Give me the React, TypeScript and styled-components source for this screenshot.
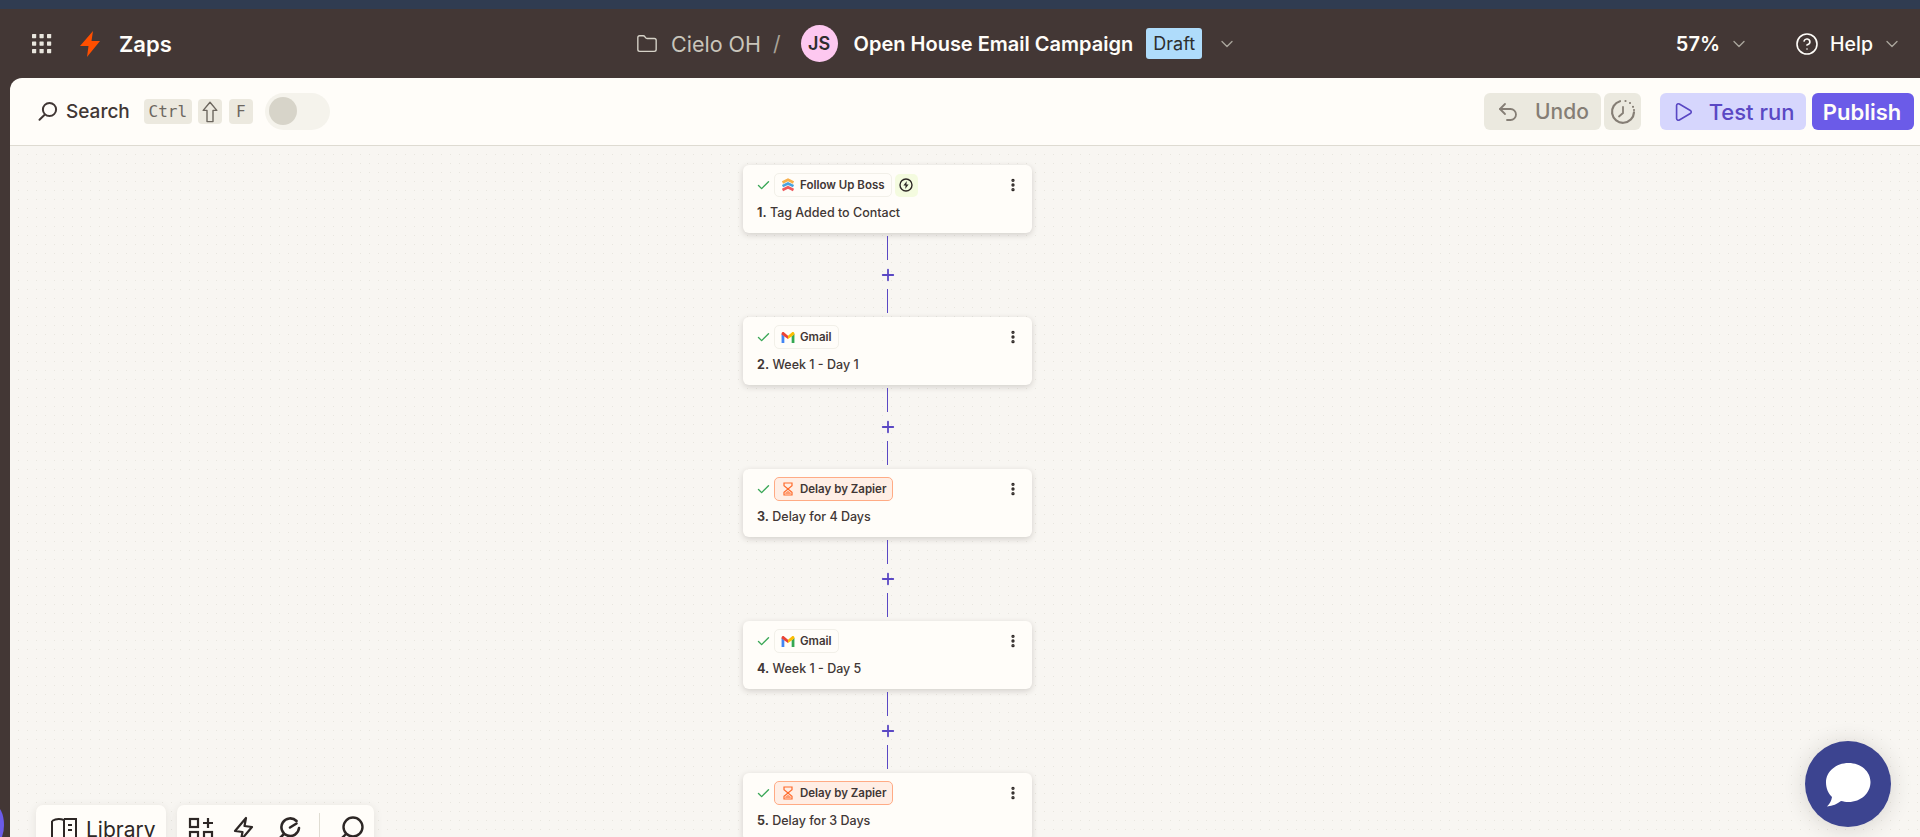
import React from "react";
import styled, { createGlobalStyle } from "styled-components";
import { Check, ChevronDown, CircleHelp, EllipsisVertical, Folder, Play, Plus, Undo2 } from "lucide-react";

const Global = createGlobalStyle`
  html, body { margin: 0; padding: 0; height: 837px; overflow: hidden; background: #433735; }
  * { box-sizing: border-box; }
  body { font-family: Inter, "Noto Sans", sans-serif; }
`;

const Page = styled.div`
  position: relative;
  height: 837px;
  display: flex;
  flex-direction: column;
  overflow: hidden;
`;
const TopStrip = styled.div`
  height: 9px;
  flex: none;
  background: #303c51;
`;
const Header = styled.header`
  height: 69px;
  flex: none;
  display: grid;
  grid-template-columns: 636px 1fr auto;
  align-items: center;
  background: #433735;
  color: #fffdf9;
`;
const HeaderLeft = styled.div`
  display: flex;
  align-items: center;
  padding-left: 32px;
`;
const BoltSlot = styled.span`
  display: flex;
  margin-left: 28px;
`;
const Zaps = styled.span`
  margin-left: 19px;
  font-size: 22px;
  font-weight: 600;
`;
const Crumbs = styled.div`
  display: flex;
  align-items: center;
`;
const FolderName = styled.span`
  margin-left: 13px;
  font-size: 21.5px;
  color: #c9c5bb;
`;
const Slash = styled.span`
  margin: 0 20px 0 12px;
  font-size: 21px;
  color: #a8a297;
`;
const Avatar = styled.div`
  width: 37px;
  height: 37px;
  border-radius: 50%;
  background: #fdc8f0;
  color: #2d2e2e;
  font-size: 18px;
  font-weight: 600;
  display: flex;
  align-items: center;
  justify-content: center;
`;
const ZapTitle = styled.span`
  margin-left: 16px;
  font-size: 20px;
  font-weight: 600;
  white-space: nowrap;
`;
const Draft = styled.span`
  margin-left: 13px;
  width: 56px;
  height: 31px;
  border-radius: 3px;
  background: #afdcfb;
  color: #2d2e2e;
  font-size: 18px;
  display: flex;
  align-items: center;
  justify-content: center;
`;
const HeaderChevron = styled.span<{ $gap: number }>`
  display: flex;
  margin-left: ${(p) => p.$gap}px;
  color: #aaa59c;
`;
const HeaderRight = styled.div`
  display: flex;
  align-items: center;
  padding-right: 18px;
`;
const Zoom = styled.span`
  font-size: 20px;
  font-weight: 600;
`;
const HelpLabel = styled.span`
  margin-left: 11px;
  font-size: 19.5px;
  font-weight: 500;
`;
const HelpIcon = styled.span`
  display: flex;
  margin-left: 46px;
`;
const Panel = styled.main`
  flex: 1;
  min-height: 0;
  margin-left: 10px;
  border-top-left-radius: 12px;
  overflow: hidden;
  display: flex;
  flex-direction: column;
  background: #fffdf9;
`;
const Toolbar = styled.div`
  height: 68px;
  flex: none;
  display: flex;
  align-items: center;
  padding: 0 6px 0 27px;
  border-bottom: 1px solid #dedbd2;
`;
const SearchLabel = styled.span`
  margin-left: 8px;
  font-size: 19px;
  font-weight: 500;
  color: #413735;
`;
const Kbd = styled.span<{ $w: number; $gap: number }>`
  width: ${(p) => p.$w}px;
  height: 25px;
  margin-left: ${(p) => p.$gap}px;
  border-radius: 4px;
  background: #ece9df;
  color: #6d675f;
  font-family: "DejaVu Sans Mono", "Liberation Mono", monospace;
  font-size: 16px;
  display: flex;
  align-items: center;
  justify-content: center;
`;
const Toggle = styled.span`
  width: 65px;
  height: 37px;
  margin-left: 12px;
  padding: 4px;
  border-radius: 19px;
  background: #f5f3ec;
  display: flex;
`;
const Knob = styled.span`
  width: 28px;
  height: 28px;
  border-radius: 50%;
  background: #d7d4c9;
`;
const Spacer = styled.div`
  flex: 1;
`;
const ToolButton = styled.button<{ $variant: "muted" | "soft" | "solid"; $w: number; $gap: number; $size: number }>`
  width: ${(p) => p.$w}px;
  height: 37px;
  margin-left: ${(p) => p.$gap}px;
  padding: 0 ${(p) => (p.$variant === "solid" ? 2 : 0)}px 0 0;
  border: 0;
  border-radius: 6px;
  display: flex;
  align-items: center;
  justify-content: center;
  font-family: inherit;
  font-size: ${(p) => p.$size}px;
  font-weight: ${(p) => (p.$variant === "solid" ? 600 : 500)};
  background: ${(p) => (p.$variant === "muted" ? "#ebe9df" : p.$variant === "soft" ? "#d6d6fd" : "#6b5be8")};
  color: ${(p) => (p.$variant === "muted" ? "#857e75" : p.$variant === "soft" ? "#5a48c4" : "#fffdf9")};
  gap: ${(p) => (p.$variant === "solid" ? 0 : 15)}px;
`;
const Canvas = styled.div`
  position: relative;
  flex: 1;
  min-height: 0;
  overflow: hidden;
  padding: 19px 0 0 733px;
  background-color: #f8f6f2;
  background-image: radial-gradient(circle, #e8e6df 0.8px, transparent 1px);
  background-size: 9px 9px;
  background-position: 4px 4px;
`;
const Flow = styled.div`
  width: 289px;
  display: flex;
  flex-direction: column;
`;
const Card = styled.div`
  height: 68px;
  flex: none;
  padding: 8px 11px 0 14px;
  border-radius: 6px;
  background: #fffdf9;
  box-shadow: 0 2px 6px rgba(45, 35, 30, 0.18);
`;
const CardTop = styled.div`
  display: flex;
  align-items: center;
  height: 24px;
`;
const CheckMark = styled.span`
  display: flex;
  width: 18px;
  margin-left: -1px;
  color: #3aa757;
`;
const AppBadge = styled.span<{ $delay?: boolean }>`
  height: 24px;
  display: flex;
  align-items: center;
  gap: 5px;
  padding: 0 6px;
  border-radius: 5px;
  font-size: 11.5px;
  font-weight: 600;
  color: #413735;
  background: ${(p) => (p.$delay ? "#ffeee5" : "#fffdf9")};
  border: 1px solid ${(p) => (p.$delay ? "#ffab85" : "#f2f0e9")};
`;
const TriggerBadge = styled.span`
  width: 23px;
  height: 23px;
  margin-left: 3px;
  border-radius: 5px;
  background: #f4fbdf;
  display: flex;
  align-items: center;
  justify-content: center;
`;
const Kebab = styled.span`
  display: flex;
  margin-left: auto;
  color: #2d2725;
`;
const StepTitle = styled.div`
  margin-top: 8px;
  font-size: 12.5px;
  font-weight: 500;
  color: #413735;
  b {
    font-weight: 700;
  }
`;
const Connector = styled.div`
  height: 84px;
  flex: none;
  padding: 3px 0 4px;
  display: flex;
  flex-direction: column;
  align-items: center;
  justify-content: space-between;
  color: #5a48c4;
`;
const Line = styled.span`
  width: 1px;
  height: 24px;
  background: #5a48c4;
`;
const Dock = styled.div`
  position: absolute;
  left: 26px;
  top: 659px;
  display: flex;
  gap: 11px;
`;
const DockCard = styled.div<{ $w: number }>`
  width: ${(p) => p.$w}px;
  height: 48px;
  padding: 0 0 0 11px;
  border-radius: 7px;
  background: #fffdf9;
  box-shadow: 0 2px 10px rgba(45, 35, 30, 0.1);
  display: flex;
  align-items: center;
  color: #2d2725;
  font-size: 21px;
`;
const DockLabel = styled.span`
  margin-left: 9px;
`;
const DockItem = styled.span<{ $gap: number }>`
  display: flex;
  flex: none;
  margin-left: ${(p) => p.$gap}px;
`;
const DockDivider = styled.span`
  flex: none;
  width: 1px;
  height: 32px;
  margin-left: 18px;
  background: #e0ddd3;
`;
const ChatButton = styled.div`
  position: absolute;
  right: 29px;
  bottom: 10px;
  width: 86px;
  height: 86px;
  border-radius: 50%;
  background: #3c4490;
  box-shadow: 0 2px 22px rgba(45, 35, 30, 0.16);
  display: flex;
  align-items: center;
  justify-content: center;
`;
const EdgeBlob = styled.div`
  position: absolute;
  left: -16px;
  top: 805px;
  width: 20px;
  height: 40px;
  border-radius: 50%;
  background: #6b5be8;
`;

const GridIcon = () => (
  <svg width="20" height="20" viewBox="0 0 20 20" fill="#e9e6de">
    {[0, 7.5, 15].flatMap((y) =>
      [0, 7.5, 15].map((x) => <rect key={`${x}-${y}`} x={x} y={y} width="4.2" height="4.2" rx="0.6" />)
    )}
  </svg>
);
const Bolt = () => (
  <svg width="20" height="26" viewBox="0 0 20 26" fill="#ff4f00">
    <path d="M13 0 L11.500 10 H20 L7 26 L8.500 15 H0 Z" />
  </svg>
);
const SearchIcon = () => (
  <svg width="21" height="21" viewBox="0 0 21 21" fill="none" stroke="#413735" strokeWidth="2">
    <circle cx="12.500" cy="8.500" r="6.600" />
    <path d="M7.400 14 L2.500 18.800" strokeLinecap="round" />
  </svg>
);
const ShiftIcon = () => (
  <svg width="16" height="22" viewBox="0 0 16 22" fill="none" stroke="#6d675f" strokeWidth="1.400">
    <path d="M8 1.200 L14.800 9.400 H11 V20.600 H5 V9.400 H1.200 Z" strokeLinejoin="round" />
  </svg>
);
const HistoryIcon = () => (
  <svg width="26" height="26" viewBox="0 0 26 26" fill="none" stroke="#857e75" strokeWidth="2.200" strokeLinecap="round">
    <path d="M10 2.200 A11 11 0 1 0 24 13.400" />
    <path d="M13 8 V14 L9 17.500" strokeWidth="1.800" />
    <path d="M15.500 2 h.01 M20 4 h.01 M23 7.800 h.01 M24 11 h.01" />
  </svg>
);
const FubIcon = () => (
  <svg width="14" height="14" viewBox="0 0 14 14" fill="none" strokeWidth="2.600">
    <path d="M1.500 4.500 L7 1.800 L12.500 4.500" stroke="#f7b04c" />
    <path d="M1.500 8.200 L7 5.500 L12.500 8.200" stroke="#4aa3df" />
    <path d="M1.500 12 L7 9.300 L12.500 12" stroke="#ef5a5f" />
  </svg>
);
const GmailIcon = () => (
  <svg width="14" height="11" viewBox="0 0 14 12" fill="none">
    <path d="M0 2 V12 H3 V5 Z" fill="#4285f4" />
    <path d="M11 5 V12 H14 V2 Z" fill="#34a853" />
    <path d="M0 2 C0 .4 1.600 -.4 2.800 .5 L7 4 L7 7.600 L0 2.600 Z" fill="#ea4335" />
    <path d="M14 2 C14 .4 12.400 -.4 11.200 .5 L7 4 L7 7.600 L14 2.600 Z" fill="#fbbc04" />
  </svg>
);
const HourglassIcon = () => (
  <svg width="14" height="14" viewBox="0 0 14 14" fill="none" stroke="#ff6a2b" strokeWidth="1.200">
    <path d="M3 1 H11 V3.800 L7 7 L3 3.800 Z" />
    <path d="M3 13 H11 V10.200 L7 7 L3 10.200 Z" />
    <path d="M4.200 12 H9.800 V10.800 L7 8.800 L4.200 10.800 Z" fill="#ff9b70" stroke="none" />
  </svg>
);
const TriggerIcon = () => (
  <svg width="14" height="14" viewBox="0 0 14 14" fill="none">
    <circle cx="7" cy="7" r="6" stroke="#2d2725" strokeWidth="1.400" />
    <path d="M7.800 3 L4.400 7.600 H6.600 L6.200 11 L9.600 6.400 H7.400 Z" fill="#2d2725" />
  </svg>
);
const LibraryIcon = () => (
  <svg width="26" height="26" viewBox="0 0 26 26" fill="none" stroke="#2d2725" strokeWidth="2">
    <path d="M1 5 C5 2.500 9 2.500 13 4 V26 M1 5 V26" />
    <path d="M13 3 H25 V26" />
    <path d="M17 9 H21 M17 14 H21" />
  </svg>
);
const AppsIcon = () => (
  <svg width="26" height="26" viewBox="0 0 26 26" fill="none" stroke="#2d2725" strokeWidth="2.200">
    <rect x="2" y="3" width="8" height="8" />
    <rect x="2" y="16" width="8" height="8" />
    <rect x="16" y="16" width="8" height="8" />
    <path d="M20 2 V12 M15 7 H25" />
  </svg>
);
const DockBolt = () => (
  <svg width="22" height="26" viewBox="0 0 22 26" fill="none" stroke="#2d2725" strokeWidth="2.200" strokeLinejoin="round">
    <path d="M13 2 L11.500 10 L19 11 L8 24 L9.500 16 L2 15 Z" />
  </svg>
);
const WandIcon = () => (
  <svg width="26" height="26" viewBox="0 0 26 26" fill="none" stroke="#2d2725" strokeWidth="2.600" strokeLinecap="round">
    <path d="M21.500 5 A8.800 8.800 0 1 0 24 12" />
    <path d="M15 11.500 L21.500 7.500" />
    <path d="M9 18 L3 24" />
  </svg>
);
const DockSearch = () => (
  <svg width="26" height="26" viewBox="0 0 26 26" fill="none" stroke="#2d2725" strokeWidth="2.400">
    <circle cx="15" cy="11" r="9.500" />
    <path d="M8 18 L3.500 22.500" />
  </svg>
);
const ChatIcon = () => (
  <svg width="46" height="46" viewBox="0 0 46 46" fill="#ffffff">
    <path d="M23.500 2 C36 2 45.500 10.500 45.500 21 C45.500 32 36 41 23.500 41 C20.500 41 18.500 40.500 16 40 C12 43 8 45 2 45.500 C5 42.500 6.500 39.500 7 36 C3 32.500 1 27 1 21.500 C1 10.500 11 2 23.500 2 Z" />
  </svg>
);

const steps = [
  { n: 1, app: "Follow Up Boss", icon: <FubIcon />, title: "Tag Added to Contact", trigger: true },
  { n: 2, app: "Gmail", icon: <GmailIcon />, title: "Week 1 - Day 1" },
  { n: 3, app: "Delay by Zapier", icon: <HourglassIcon />, title: "Delay for 4 Days", delay: true },
  { n: 4, app: "Gmail", icon: <GmailIcon />, title: "Week 1 - Day 5" },
  { n: 5, app: "Delay by Zapier", icon: <HourglassIcon />, title: "Delay for 3 Days", delay: true },
];

export default function App() {
  return (
    <Page>
      <Global />
      <TopStrip />
      <Header>
        <HeaderLeft>
          <GridIcon />
          <BoltSlot><Bolt /></BoltSlot>
          <Zaps>Zaps</Zaps>
        </HeaderLeft>
        <Crumbs>
          <Folder size={22} strokeWidth={1.5} color="#d6d2c8" />
          <FolderName>Cielo OH</FolderName>
          <Slash>/</Slash>
          <Avatar>JS</Avatar>
          <ZapTitle>Open House Email Campaign</ZapTitle>
          <Draft>Draft</Draft>
          <HeaderChevron $gap={15}>
            <ChevronDown size={20} strokeWidth={1.6} />
          </HeaderChevron>
        </Crumbs>
        <HeaderRight>
          <Zoom>57%</Zoom>
          <HeaderChevron $gap={9}>
            <ChevronDown size={20} strokeWidth={1.6} />
          </HeaderChevron>
          <HelpIcon>
            <CircleHelp size={24} strokeWidth={1.6} />
          </HelpIcon>
          <HelpLabel>Help</HelpLabel>
          <HeaderChevron $gap={9}>
            <ChevronDown size={20} strokeWidth={1.6} />
          </HeaderChevron>
        </HeaderRight>
      </Header>
      <Panel>
        <Toolbar>
          <SearchIcon />
          <SearchLabel>Search</SearchLabel>
          <Kbd $w={48} $gap={14}>Ctrl</Kbd>
          <Kbd $w={24} $gap={6}><ShiftIcon /></Kbd>
          <Kbd $w={24} $gap={7}>F</Kbd>
          <Toggle><Knob /></Toggle>
          <Spacer />
          <ToolButton $variant="muted" $w={117} $gap={0} $size={21}>
            <Undo2 size={24} strokeWidth={1.8} />
            Undo
          </ToolButton>
          <ToolButton $variant="muted" $w={37} $gap={3} $size={21}>
            <HistoryIcon />
          </ToolButton>
          <ToolButton $variant="soft" $w={146} $gap={19} $size={22}>
            <Play size={22} strokeWidth={1.8} />
            Test run
          </ToolButton>
          <ToolButton $variant="solid" $w={102} $gap={6} $size={22}>Publish</ToolButton>
        </Toolbar>
        <Canvas>
          <Flow>
            {steps.map((s, i) => (
              <React.Fragment key={s.n}>
                <Card>
                  <CardTop>
                    <CheckMark>
                      <Check size={15} strokeWidth={2.2} />
                    </CheckMark>
                    <AppBadge $delay={s.delay}>
                      {s.icon}
                      {s.app}
                    </AppBadge>
                    {s.trigger && (
                      <TriggerBadge>
                        <TriggerIcon />
                      </TriggerBadge>
                    )}
                    <Kebab>
                      <EllipsisVertical size={16} strokeWidth={3} />
                    </Kebab>
                  </CardTop>
                  <StepTitle>
                    <b>{s.n}.</b> {s.title}
                  </StepTitle>
                </Card>
                {i < steps.length - 1 && (
                  <Connector>
                    <Line />
                    <Plus size={18} strokeWidth={2.400} />
                    <Line />
                  </Connector>
                )}
              </React.Fragment>
            ))}
          </Flow>
          <Dock>
            <DockCard $w={130}>
              <DockItem $gap={4}><LibraryIcon /></DockItem>
              <DockLabel>Library</DockLabel>
            </DockCard>
            <DockCard $w={197}>
              <DockItem $gap={0}><AppsIcon /></DockItem>
              <DockItem $gap={19}><DockBolt /></DockItem>
              <DockItem $gap={20}><WandIcon /></DockItem>
              <DockDivider />
              <DockItem $gap={18}><DockSearch /></DockItem>
            </DockCard>
          </Dock>
          <ChatButton>
            <ChatIcon />
          </ChatButton>
        </Canvas>
      </Panel>
      <EdgeBlob />
    </Page>
  );
}
